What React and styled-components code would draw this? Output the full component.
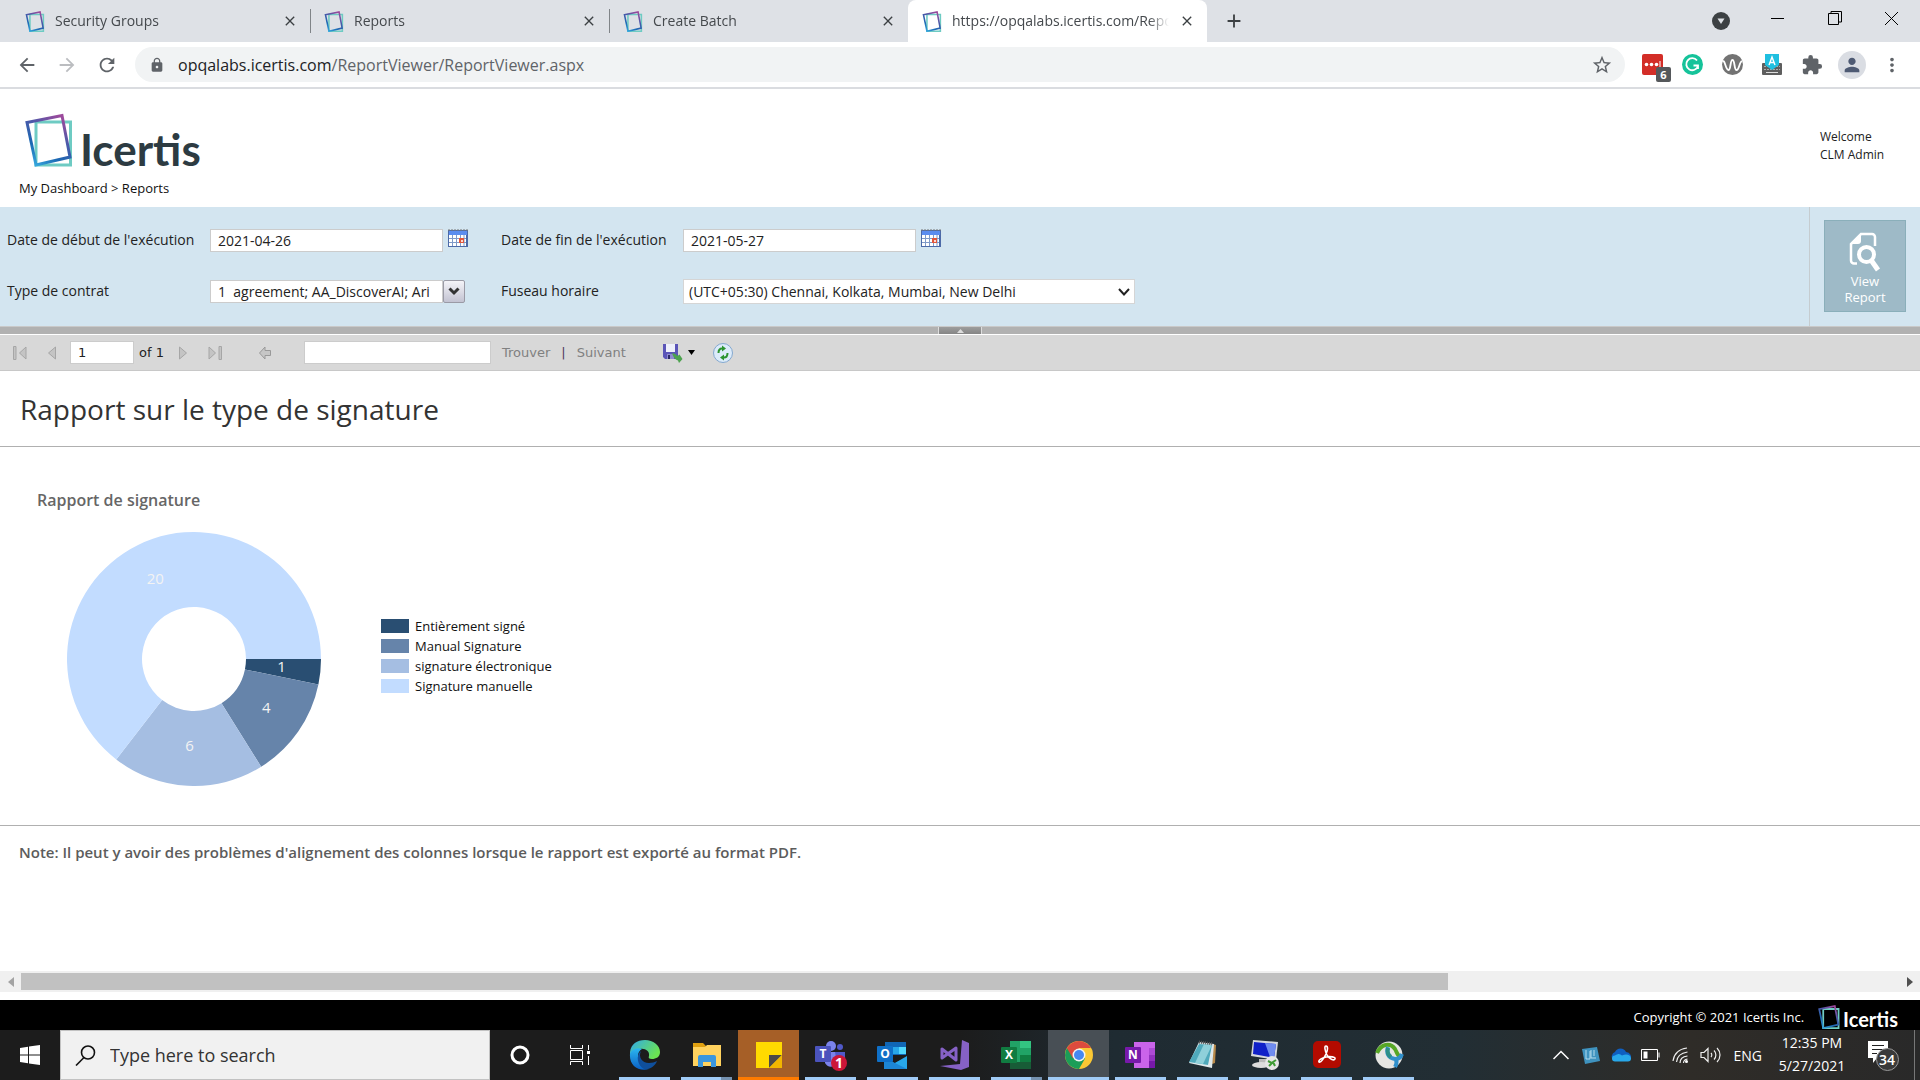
import React, { useState } from 'react';
import styled, { createGlobalStyle, css } from 'styled-components';
import {
  MdAdd,
  MdArrowBack,
  MdArrowForward,
  MdClose,
  MdExtension,
  MdLock,
  MdMoreVert,
  MdPerson,
  MdRefresh,
  MdStarBorder
} from 'react-icons/md';

const GlobalStyle = createGlobalStyle`
  *, *::before, *::after {
    box-sizing: border-box;
  }
  body {
    margin: 0;
    background-color: #fff;
    color: #222;
    font-family: 'Segoe UI', 'Open Sans', sans-serif;
    font-size: 14px;
  }
  button, input, select {
    font-family: inherit;
    font-size: inherit;
    color: inherit;
  }
  button {
    border: none;
    background: none;
    padding: 0;
  }
  svg {
    display: block;
    flex: none;
  }
`;

const Page = styled.div`
  display: flex;
  flex-direction: column;
  min-height: 100vh;
`;

/* browser window */

const TabStrip = styled.div`
  display: flex;
  height: 42px;
  padding-left: 11px;
  background-color: #dee1e6;
`;

const Tab = styled.div`
  display: flex;
  align-items: center;
  gap: 10px;
  width: 299px;
  padding: 0 12px 0 14px;
  color: #45494d;
  background-image: ${props =>
    props.$divided ? 'linear-gradient(#808488, #808488)' : 'none'};
  background-size: 1px 24px;
  background-position: left center;
  background-repeat: no-repeat;
  ${props =>
    props.$active &&
    css`
      background-color: #fff;
      border-radius: 8px 8px 0 0;
    `}
`;

const TabTitle = styled.span`
  flex: 1;
  min-width: 0;
  margin-right: -8px;
  overflow: hidden;
  white-space: nowrap;
  line-height: 20px;
  mask-image: linear-gradient(to left, transparent 8px, #000 28px);
`;

const CloseTab = styled.button`
  font-size: 16px;
  color: #3c4043;
`;

const NewTab = styled.button`
  width: 54px;
  display: grid;
  place-items: center;
  font-size: 22px;
  color: #3c4043;
`;

const WindowButtons = styled.div`
  display: flex;
  margin-left: auto;
  height: 36px;
`;

const WindowButton = styled.button`
  display: grid;
  place-items: center;
  width: 57px;
`;

const AddressBar = styled.div`
  display: flex;
  align-items: center;
  height: 47px;
  padding: 0 8px 0 7px;
  border-bottom: 2px solid #dadce0;
`;

const NavButton = styled.button`
  display: grid;
  place-items: center;
  width: 40px;
  height: 36px;
  font-size: 22px;
  color: ${props => (props.disabled ? '#bbbdc0' : '#5f6368')};
`;

const Omnibox = styled.div`
  display: flex;
  align-items: center;
  flex: 1;
  height: 35px;
  margin: 0 7px 0 8px;
  padding: 0 12px 0 14px;
  border-radius: 18px;
  background-color: #f1f3f4;
  font-size: 16px;
  color: #5f6368;
  p {
    flex: 1;
    margin: 0 0 0 13px;
    line-height: 24px;
  }
  b {
    font-weight: normal;
    color: #202124;
  }
  button {
    font-size: 22px;
  }
`;

const Avatar = styled.span`
  display: grid;
  place-items: center;
  width: 28px;
  height: 28px;
  border-radius: 50%;
  background-color: #dadde3;
  color: #4e5a73;
`;

const ExtensionBadge = styled.span`
  position: absolute;
  left: 24px;
  top: 20px;
  width: 15px;
  height: 15px;
  border-radius: 2px;
  background-color: #55585b;
  color: #fff;
  font-size: 11px;
  font-weight: bold;
  line-height: 15px;
  text-align: center;
`;

const ExtensionButton = styled(NavButton)`
  position: relative;
`;

/* page header */

const Header = styled.header`
  display: flex;
  justify-content: space-between;
  height: 118px;
  padding: 24px 31px 0 19px;
`;

const Brand = styled.div`
  display: flex;
  align-items: flex-end;
  gap: ${props => (props.$small ? 3 : 6)}px;
  padding-left: ${props => (props.$small ? 0 : 5)}px;
  color: ${props => (props.$small ? '#fff' : '#2d3b42')};
  font-family: Lato, sans-serif;
  font-weight: bold;
  font-size: ${props => (props.$small ? 20 : 44)}px;
  line-height: ${props => (props.$small ? 20 : 36)}px;
`;

const Breadcrumb = styled.nav`
  margin-top: 11px;
  font-size: 13px;
  line-height: 20px;
  a {
    color: #111;
    text-decoration: none;
  }
`;

const Welcome = styled.div`
  width: 69px;
  padding-top: 15px;
  font-size: 12px;
  line-height: 18px;
  white-space: nowrap;
`;

/* report parameters */

const Parameters = styled.form`
  display: flex;
  background-color: #d3e5f0;
  border-bottom: 1px solid #c9c9c9;
`;

const Fields = styled.div`
  flex: 1;
  display: grid;
  grid-template-columns: 203px 291px 182px 1fr;
  grid-auto-rows: 51px;
  align-items: center;
  padding: 8px 0 9px 7px;
`;

const Label = styled.label`
  line-height: 20px;
  padding-bottom: 2px;
`;

const Field = styled.div`
  display: flex;
  align-items: flex-start;
  gap: ${props => (props.$attached ? 0 : 5)}px;
`;

const TextInput = styled.input`
  width: ${props => props.$width || 233}px;
  height: 23px;
  border: 1px solid #ccc;
  border-radius: 0;
  padding: 0 7px;
  background-color: #fff;
  line-height: 20px;
  outline: none;
`;

const DropButton = styled.button`
  display: grid;
  place-items: center;
  width: 22px;
  height: 23px;
  border: 1px solid #9a9aa5;
  border-radius: 2px;
  background: linear-gradient(#f4f4f8, #c3c3d2);
`;

const SelectBox = styled.div`
  display: grid;
  width: 452px;
  align-items: center;
  & > * {
    grid-area: 1 / 1;
  }
  select {
    appearance: none;
    height: 25px;
    padding: 0 24px 0 5px;
    border: 1px solid #d5d5d5;
    border-radius: 0;
    background-color: #fff;
  }
  svg {
    justify-self: end;
    margin-right: 5px;
    pointer-events: none;
  }
`;

const ViewCell = styled.div`
  width: 111px;
  padding: 13px 14px;
  border-left: 1px solid #c5ccd0;
`;

const ViewButton = styled.button`
  display: flex;
  flex-direction: column;
  align-items: center;
  width: 82px;
  height: 92px;
  padding-top: 11px;
  border: 1px solid #8aafba;
  background-color: #9ebac7;
  color: #fff;
  font-size: 13px;
  line-height: 16px;
  svg {
    margin-bottom: 1px;
  }
`;

const Splitter = styled.div`
  display: flex;
  justify-content: center;
  height: 8px;
  background-color: #b1b1b1;
  border-bottom: 1px solid #fff;
`;

const SplitterHandle = styled.button`
  display: grid;
  place-items: center;
  width: 44px;
  border: solid #ddd;
  border-width: 0 1px;
  background: linear-gradient(#9d9d9d, #858585);
`;

/* viewer toolbar */

const ViewerToolbar = styled.div`
  display: flex;
  align-items: center;
  height: 36px;
  padding-left: 4px;
  background-color: #d8d8d8;
  border-bottom: 1px solid #c8c8c8;
  font-family: Verdana, 'DejaVu Sans', sans-serif;
  font-size: 13px;
`;

const ToolButton = styled.button`
  display: grid;
  place-items: center;
  width: 32px;
  height: 28px;
`;

const Pager = styled.div`
  display: flex;
  align-items: center;
  margin-right: 18px;
`;

const PageNumber = styled.div`
  display: flex;
  align-items: center;
  gap: 5px;
  padding: 0 3px 0 2px;
`;

const Find = styled.div`
  display: flex;
  align-items: center;
  padding: 0 31px 0 23px;
  gap: 11px;
  button {
    color: #808080;
  }
`;

const Divider = styled.span`
  color: #523a5c;
`;

const ExportButton = styled.button`
  display: flex;
  align-items: center;
  gap: 5px;
  padding: 0 12px 0 6px;
`;

/* report */

const Report = styled.main`
  flex: 1;
`;

const ReportTitle = styled.h1`
  margin: 0;
  padding: 19px 20px 17px;
  border-bottom: 1px solid #b0b0b0;
  color: #333;
  font-size: 28px;
  font-weight: normal;
  line-height: 39px;
`;

const ChartSection = styled.section`
  padding: 43px 37px 39px;
  border-bottom: 1px solid #b0b0b0;
`;

const ChartTitle = styled.h2`
  margin: 0 0 22px;
  color: #666;
  font-size: 16px;
  font-weight: 600;
  line-height: 20px;
`;

const Chart = styled.div`
  display: flex;
  align-items: center;
  gap: 60px;
  padding-left: 30px;
`;

const Legend = styled.ul`
  margin: 0;
  padding: 0 0 6px;
  list-style: none;
  font-size: 13px;
`;

const LegendItem = styled.li`
  display: flex;
  align-items: center;
  gap: 6px;
  height: 20px;
  color: #111;
  &::before {
    content: '';
    width: 28px;
    height: 14px;
    background-color: ${props => props.$color};
  }
`;

const Note = styled.p`
  margin: 0;
  padding: 16px 19px;
  color: #5c5c5c;
  font-size: 15px;
  font-weight: 600;
  line-height: 20px;
`;

const ScrollBar = styled.div`
  display: flex;
  align-items: center;
  height: 21px;
  margin-bottom: 8px;
  background-color: #f0f0f0;
`;

const ScrollArrow = styled.button`
  display: grid;
  place-items: center;
  width: 21px;
  height: 21px;
`;

const ScrollTrack = styled.div`
  flex: 1;
`;

const ScrollThumb = styled.div`
  width: 76%;
  height: 17px;
  background-color: #c1c1c1;
`;

const Footer = styled.footer`
  display: flex;
  align-items: center;
  justify-content: flex-end;
  gap: 14px;
  height: 30px;
  padding: 3px 22px 0 0;
  background-color: #000;
  color: #fff;
  font-size: 13px;
  line-height: 20px;
`;

/* desktop taskbar */

const TaskBar = styled.div`
  display: flex;
  height: 50px;
  background: linear-gradient(
    to right,
    #1c1c1c 50%,
    #1f2b32 58%,
    #222e34 76%,
    #2f2c28 88%,
    #292929
  );
  color: #fff;
`;

const TaskButton = styled.button`
  display: grid;
  place-items: center;
  width: 60px;
`;

const SearchBox = styled.label`
  display: flex;
  align-items: center;
  gap: 14px;
  width: 430px;
  padding-left: 14px;
  border: 1px solid #c2c2c2;
  background-color: #f1f1f1;
  color: #222;
  font-size: 18px;
  input {
    flex: 1;
    border: none;
    background: none;
    outline: none;
    padding: 0;
    &::placeholder {
      color: #333;
      opacity: 1;
    }
  }
`;

const Apps = styled.div`
  display: flex;
  padding-left: 4px;
`;

const appTones = {
  active: '#484f55',
  alert: '#a65f27'
};

const AppButton = styled.button`
  display: grid;
  grid-template-rows: 1fr 3px;
  place-items: center;
  width: 62px;
  padding: 3px 1px 0 0;
  background: ${props =>
    props.$tone
      ? `linear-gradient(${appTones[props.$tone]}, ${appTones[props.$tone]}) left / 61px 100% no-repeat`
      : 'none'};
  &::after {
    content: '';
    width: ${props => (props.$tone ? 61 : 51)}px;
    height: 3px;
    background: ${props => (props.$tone === 'alert' ? '#ff7b00' : '#a0cbf6')};
    border-right: ${props => (props.$stacked ? '11px solid #7592b0' : 'none')};
  }
`;

const Tray = styled.div`
  display: flex;
  align-items: center;
  margin-left: auto;
  line-height: 23px;
`;

const TrayButton = styled.button`
  display: grid;
  place-items: center;
  width: 30px;
  height: 50px;
`;

const Language = styled.button`
  padding-left: 8px;
`;

const Clock = styled.div`
  width: 82px;
  margin-left: 9px;
  padding-bottom: 2px;
  text-align: center;
`;

const Notifications = styled.button`
  width: 62px;
  height: 50px;
  display: grid;
  place-items: center;
  border-right: 1px solid #777;
  margin-right: 5px;
`;

const Mark = ({ width, height, id, stroke = 2 }) => (
  <svg width={width} height={height} viewBox="0 0 48 54" fill="none">
    <defs>
      <linearGradient id={id} x1="0.75" y1="0" x2="0.2" y2="1">
        <stop offset="0" stopColor="#9c4a9c" />
        <stop offset="0.35" stopColor="#4d58a8" />
        <stop offset="0.7" stopColor="#1b68b3" />
        <stop offset="1" stopColor="#36a6dc" />
      </linearGradient>
    </defs>
    <path d="M11 9H45.500V52H11Z" stroke="#6ecbc3" strokeWidth={stroke} />
    <path d="M2 9.500L37 2.500L45 44L11 52Z" stroke={`url(#${id})`} strokeWidth={stroke} />
  </svg>
);

const CalendarIcon = () => (
  <svg width="20" height="20" viewBox="0 0 20 20">
    <path d="M0 1h20v17H0z" fill="#4c6aa8" />
    <path d="M1 0v2M4 0v2M7 0v2M10 0v2M13 0v2M16 0v2M19 0v2" stroke="#777" />
    <path d="M1 2h18v4H1z" fill="#5b8def" />
    <path d="M1 6h17v11H1z" fill="#fff" />
    <path d="M1 9.500h17M1 13.500h17M4.500 6v11M8.500 6v11M12.500 6v11M16 6v11" stroke="#7f9ac8" />
    <path d="M11 9h5v5h-5z" fill="#e2563a" />
    <path d="M13 11h2v2h-2z" fill="#fbd9cf" />
  </svg>
);

const slices = [
  { name: 'Entièrement signé', value: 1, color: '#294e72' },
  { name: 'Manual Signature', value: 4, color: '#6684aa' },
  { name: 'signature électronique', value: 6, color: '#a5bee2' },
  { name: 'Signature manuelle', value: 20, color: '#c2dcff' }
];

const Donut = ({ data }) => {
  const outer = 127;
  const inner = 52;
  const total = data.reduce((sum, item) => sum + item.value, 0);
  const point = (radius, share) => {
    const angle = share * Math.PI * 2;
    return [outer + radius * Math.cos(angle), outer + radius * Math.sin(angle)];
  };
  let used = 0;
  return (
    <svg width="254" height="254" viewBox="0 0 254 254">
      {data.map(item => {
        const from = used / total;
        used += item.value;
        const to = used / total;
        const large = to - from > 0.5 ? 1 : 0;
        const [x, y] = point(88, (from + to) / 2);
        return (
          <g key={item.name}>
            <path
              fill={item.color}
              d={`M${point(outer, from)}A${outer} ${outer} 0 ${large} 1 ${point(outer, to)}L${point(inner, to)}A${inner} ${inner} 0 ${large} 0 ${point(inner, from)}Z`}
            />
            <text x={x} y={y + 4} fill="#f3f3f3" fontSize="15" textAnchor="middle">
              {item.value}
            </text>
          </g>
        );
      })}
    </svg>
  );
};

const tabs = ['Security Groups', 'Reports', 'Create Batch', 'https://opqalabs.icertis.com/Repo'];

const Browser = () => (
  <>
    <TabStrip>
      {tabs.map((title, index) => (
        <Tab key={title} $divided={index === 1 || index === 2} $active={index === 3}>
          <Mark id={`tab${index}`} width={20} height={21} stroke={4} />
          <TabTitle>{title}</TabTitle>
          <CloseTab aria-label="Close tab">
            <MdClose />
          </CloseTab>
        </Tab>
      ))}
      <NewTab aria-label="New tab">
        <MdAdd />
      </NewTab>
      <WindowButtons>
        <WindowButton aria-label="Search tabs">
          <svg width="18" height="30" viewBox="0 0 18 30">
            <circle cx="9" cy="18" r="9" fill="#3c4043" />
            <path d="M5.500 15.500h7L9 21z" fill="#dee1e6" />
          </svg>
        </WindowButton>
        <WindowButton aria-label="Minimize">
          <svg width="13" height="13" viewBox="0 0 13 13">
            <path d="M0 6.500h13" stroke="#000" />
          </svg>
        </WindowButton>
        <WindowButton aria-label="Restore">
          <svg width="14" height="14" viewBox="0 0 14 14" fill="none" stroke="#000">
            <path d="M0.500 2.500h10v11h-10zM3 2.500v-2h10.500v10.500h-3" />
          </svg>
        </WindowButton>
        <WindowButton aria-label="Close">
          <svg width="13" height="13" viewBox="0 0 13 13">
            <path d="M0 0L13 13M13 0L0 13" stroke="#000" />
          </svg>
        </WindowButton>
      </WindowButtons>
    </TabStrip>
    <AddressBar>
      <NavButton aria-label="Back">
        <MdArrowBack />
      </NavButton>
      <NavButton aria-label="Forward" disabled>
        <MdArrowForward />
      </NavButton>
      <NavButton aria-label="Reload">
        <MdRefresh />
      </NavButton>
      <Omnibox>
        <MdLock />
        <p>
          <b>opqalabs.icertis.com</b>/ReportViewer/ReportViewer.aspx
        </p>
        <button aria-label="Bookmark this page">
          <MdStarBorder />
        </button>
      </Omnibox>
      <ExtensionButton aria-label="LastPass">
        <svg width="21" height="21" viewBox="0 0 21 21">
          <rect width="21" height="21" rx="2" fill="#d32d27" />
          <circle cx="4.500" cy="10.500" r="1.800" fill="#fff" />
          <circle cx="9.500" cy="10.500" r="1.800" fill="#fff" />
          <circle cx="14.500" cy="10.500" r="1.800" fill="#fff" />
          <path d="M18 7v7" stroke="#fff" />
        </svg>
        <ExtensionBadge>6</ExtensionBadge>
      </ExtensionButton>
      <ExtensionButton aria-label="Grammarly">
        <svg width="21" height="21" viewBox="0 0 21 21" fill="none">
          <circle cx="10.500" cy="10.500" r="10.500" fill="#15c39a" />
          <path d="M15 6.500A6 6 0 1 0 16 12M11.500 11.500H16V15" stroke="#fff" strokeWidth="1.800" />
        </svg>
      </ExtensionButton>
      <ExtensionButton aria-label="Wordtune">
        <svg width="21" height="21" viewBox="0 0 21 21" fill="none">
          <circle cx="10.500" cy="10.500" r="10.500" fill="#737373" />
          <path
            d="M0.500 7.500C3 5 3.500 16 6.500 16C9 16 8 6 10.500 6S12 16 14.500 16C17.500 16 17 8 20 7"
            stroke="#fff"
            strokeWidth="1.800"
          />
        </svg>
      </ExtensionButton>
      <ExtensionButton aria-label="Keyboard">
        <svg width="20" height="21" viewBox="0 0 20 21" fill="none">
          <rect y="9" width="20" height="12" rx="1" fill="#5e5e5e" />
          <path d="M2 12.500h16M2 15.500h16" stroke="#aaa" strokeDasharray="2 1" />
          <path d="M4 18.500h12" stroke="#ddd" />
          <path d="M3 0h14v11l-7 5l-7-5z" fill="#1fbfe0" />
          <path d="M7 11L10 3L13 11M8 8.500h4" stroke="#fff" strokeWidth="1.400" />
        </svg>
      </ExtensionButton>
      <ExtensionButton aria-label="Extensions">
        <MdExtension />
      </ExtensionButton>
      <ExtensionButton aria-label="Profile">
        <Avatar>
          <MdPerson />
        </Avatar>
      </ExtensionButton>
      <ExtensionButton aria-label="Menu">
        <MdMoreVert />
      </ExtensionButton>
    </AddressBar>
  </>
);

const ParameterPanel = () => {
  const [start, setStart] = useState('2021-04-26');
  const [end, setEnd] = useState('2021-05-27');
  return (
    <Parameters onSubmit={e => e.preventDefault()}>
      <Fields>
        <Label htmlFor="start">Date de début de l'exécution</Label>
        <Field>
          <TextInput id="start" value={start} onChange={e => setStart(e.target.value)} />
          <button type="button" aria-label="Calendar">
            <CalendarIcon />
          </button>
        </Field>
        <Label htmlFor="end">Date de fin de l'exécution</Label>
        <Field>
          <TextInput id="end" value={end} onChange={e => setEnd(e.target.value)} />
          <button type="button" aria-label="Calendar">
            <CalendarIcon />
          </button>
        </Field>
        <Label htmlFor="type">Type de contrat</Label>
        <Field $attached>
          <TextInput id="type" readOnly value={'1\u00a0\u00a0agreement; AA_DiscoverAI; Ari'} />
          <DropButton type="button" aria-label="Choose">
            <svg width="12" height="9" viewBox="0 0 12 9" fill="none">
              <path d="M1.500 1.500L6 6L10.500 1.500" stroke="#333" strokeWidth="3" />
            </svg>
          </DropButton>
        </Field>
        <Label htmlFor="zone">Fuseau horaire</Label>
        <SelectBox>
          <select id="zone">
            <option>(UTC+05:30) Chennai, Kolkata, Mumbai, New Delhi</option>
          </select>
          <svg width="12" height="8" viewBox="0 0 12 8" fill="none">
            <path d="M1 1L6 6.500L11 1" stroke="#222" strokeWidth="2" />
          </svg>
        </SelectBox>
      </Fields>
      <ViewCell>
        <ViewButton>
          <svg width="32" height="40" viewBox="0 0 32 40" fill="none">
            <path
              d="M8 31.500H5a3 3 0 0 1-3-3V12L12 2H23a3 3 0 0 1 3 3V14"
              stroke="#fff"
              strokeWidth="2.500"
            />
            <path d="M2 12L12 2V9a3 3 0 0 1-3 3z" fill="#fff" />
            <circle cx="17.500" cy="22.500" r="7.500" stroke="#fff" strokeWidth="4" />
            <path d="M22 28L29 38" stroke="#fff" strokeWidth="5" />
          </svg>
          View
          <br />
          Report
        </ViewButton>
      </ViewCell>
    </Parameters>
  );
};

const PagerIcon = ({ back, bar }) => (
  <svg width="16" height="16" viewBox="0 0 16 16" fill="#c4c4c4" stroke="#a6a6a6">
    <g transform={back ? undefined : 'rotate(180 8 8)'}>
      {bar && <path d="M1.500 1.500h2.500v13h-2.500z" />}
      <path d={bar ? 'M14 2v12L7.500 8z' : 'M11.500 2v12L4.500 8z'} />
    </g>
  </svg>
);

const Toolbar = () => {
  const [page, setPage] = useState('1');
  return (
    <ViewerToolbar>
      <Pager>
        <ToolButton aria-label="First page">
          <PagerIcon back bar />
        </ToolButton>
        <ToolButton aria-label="Previous page">
          <PagerIcon back />
        </ToolButton>
        <PageNumber>
          <TextInput
            $width={64}
            aria-label="Current page"
            value={page}
            onChange={e => setPage(e.target.value)}
          />
          of 1
        </PageNumber>
        <ToolButton aria-label="Next page">
          <PagerIcon />
        </ToolButton>
        <ToolButton aria-label="Last page">
          <PagerIcon bar />
        </ToolButton>
      </Pager>
      <ToolButton aria-label="Back to parent report">
        <svg width="12" height="14" viewBox="0 0 12 14" fill="#c6c6c6" stroke="#999">
          <path d="M0.500 7L6 1V4.500H11.500V9.500H6V13z" />
        </svg>
      </ToolButton>
      <Find>
        <TextInput $width={187} aria-label="Find text" />
        <button>Trouver</button>
        <Divider>|</Divider>
        <button>Suivant</button>
      </Find>
      <ExportButton aria-label="Export">
        <svg width="20" height="20" viewBox="0 0 20 20">
          <path d="M0 1h15v15H2l-2-2z" fill="#5b55b8" />
          <path d="M3 1h9v8H3z" fill="#eef0fb" />
          <path d="M4 11h7v5H4z" fill="#8f8bd0" />
          <path d="M5 12h2v4H5z" fill="#2c2a66" />
          <path d="M8 10c3 0 5 1 6.500 3l2-1.500l3 4.500l-3.500 4l-1-2.500c-3-1-5-4-6-7.500z" fill="#4da34f" />
        </svg>
        <svg width="7" height="8" viewBox="0 0 7 8">
          <path d="M0 1h7L3.500 6z" fill="#000" />
        </svg>
      </ExportButton>
      <ToolButton aria-label="Refresh">
        <svg width="20" height="20" viewBox="0 0 20 20" fill="none">
          <circle cx="10" cy="10" r="9.500" fill="#dcebfa" stroke="#84a8cf" />
          <path d="M5.500 10c0-3 1-4.500 3.500-4.500M14.500 10c0 3-1 4.500-3.500 4.500" stroke="#2c9430" strokeWidth="2" />
          <path d="M9 2.500l4 3L9 8.500zM11 11.500l-4 3l4 3z" fill="#2c9430" />
        </svg>
      </ToolButton>
    </ViewerToolbar>
  );
};

const Letter = ({ x = 0, y = 8, color, children }) => (
  <>
    <rect x={x} y={y} width="16" height="16" rx="1" fill={color} />
    <text
      x={x + 8}
      y={y + 12}
      fill="#fff"
      fontSize="12"
      fontWeight="bold"
      textAnchor="middle"
    >
      {children}
    </text>
  </>
);

const apps = [
  {
    name: 'Edge',
    icon: (
      <>
        <defs>
          <linearGradient id="edgeTop" x1="0" y1="0" x2="1" y2="0.500">
            <stop offset="0" stopColor="#2fa9ec" />
            <stop offset="1" stopColor="#6be352" />
          </linearGradient>
          <linearGradient id="edgeSide" x1="0" y1="0" x2="0" y2="1">
            <stop offset="0" stopColor="#2bb6f0" />
            <stop offset="1" stopColor="#0a5fc4" />
          </linearGradient>
        </defs>
        <path d="M1 13C2 5 8 1 16 1c8 0 15 5 15 12c0 5-4 7-8 7c-3 0-4-1-3-3c1-5-4-8-9-7C6 11 3 13 1 16z" fill="url(#edgeTop)" />
        <path d="M1 15c1-4 7-7 12-5c-4 2-5 7-3 12c2 4 6 7 10 8C9 33 0 26 1 15z" fill="url(#edgeSide)" />
        <path d="M12 12c-3 6 1 12 8 12c3 0 6-1 8-2c-2 5-7 9-13 8C9 27 6 17 12 12z" fill="#0f4f9c" />
      </>
    )
  },
  {
    name: 'File Explorer',
    stacked: true,
    icon: (
      <>
        <path d="M2 4h10l3 3h14v18H2z" fill="#e0a010" />
        <path d="M2 8h12l2-2h14v21H2z" fill="#ffd25e" />
        <path d="M7 28V18a2 2 0 0 1 2-2h14a2 2 0 0 1 2 2v10h-5v-5h-8v5z" fill="#3a96dd" />
      </>
    )
  },
  {
    name: 'Sticky Notes',
    tone: 'alert',
    icon: (
      <>
        <path d="M3 3h26v26H3z" fill="#ffda00" />
        <path d="M16 29V16H29z" fill="#4c4a48" />
        <path d="M16 29H29V16z" fill="#f2b600" />
      </>
    )
  },
  {
    name: 'Teams',
    icon: (
      <>
        <circle cx="16" cy="7" r="5" fill="#7b83eb" />
        <circle cx="25" cy="8" r="3" fill="#5059c9" />
        <path d="M10 13h13v9a7 7 0 0 1-13 2z" fill="#7b83eb" />
        <path d="M20 13h10v8a5 5 0 0 1-8 3z" fill="#5059c9" />
        <Letter y={7} color="#4b53bc">T</Letter>
        <circle cx="24" cy="24" r="8" fill="#cc1638" />
        <text x="24" y="29" fill="#fff" fontSize="14" fontWeight="bold" textAnchor="middle">
          1
        </text>
      </>
    )
  },
  {
    name: 'Outlook',
    icon: (
      <>
        <path d="M8 3h21v13H8z" fill="#1066b5" />
        <path d="M15 8h7v7h-7z" fill="#28a8ea" />
        <path d="M22 8h7v7h-7z" fill="#50d9ff" />
        <path d="M8 15h7v7H8z" fill="#0a4f96" />
        <path d="M7 30V18l11 6l12-6v12z" fill="#1c86d6" />
        <path d="M30 17v13L18 24z" fill="#28a8ea" />
        <Letter y={7} color="#0f70c8">O</Letter>
      </>
    )
  },
  {
    name: 'Visual Studio',
    icon: (
      <>
        <path d="M23 1l7 3v24l-8 3L1 27l20-2z" fill="#8661c5" />
        <path
          d="M3 10v9l14-10v12L3 10z"
          fill="none"
          stroke="#8661c5"
          strokeWidth="3"
          strokeLinejoin="round"
        />
      </>
    )
  },
  {
    name: 'Excel',
    stacked: true,
    icon: (
      <>
        <path d="M9 2h21v28H9z" fill="#21a366" />
        <path d="M19 2h11v7H19z" fill="#33c481" />
        <path d="M19 16h11v7H19z" fill="#107c41" />
        <path d="M9 23h21v7H9z" fill="#185c37" />
        <Letter color="#107c41">X</Letter>
      </>
    )
  },
  {
    name: 'Chrome',
    tone: 'active',
    icon: (
      <>
        <circle cx="16" cy="16" r="14" fill="#fbc834" />
        <path d="M16 16L3.900 9A14 14 0 0 0 16 30L22 19.500z" fill="#1c9d58" />
        <path d="M16 9h12.100A14 14 0 0 0 3.900 9L10 19.500z" fill="#dd4b3e" />
        <circle cx="16" cy="16" r="6.500" fill="#f3f3f3" />
        <circle cx="16" cy="16" r="5" fill="#4688f1" />
      </>
    )
  },
  {
    name: 'OneNote',
    icon: (
      <>
        <path d="M9 3h21v26H9z" fill="#ca64ea" />
        <path d="M24 9h6v7h-6z" fill="#ae4bd5" />
        <path d="M24 16h6v6h-6z" fill="#9332bf" />
        <path d="M24 22h6v7h-6z" fill="#7719aa" />
        <Letter color="#7719aa">N</Letter>
      </>
    )
  },
  {
    name: 'Notepad',
    icon: (
      <>
        <path d="M26 5l3 1l-1 18l-3 1z" fill="#b98a4a" />
        <path d="M12 3l15 2l-2 24L2 24z" fill="#dfe9ec" />
        <path d="M12 5l13 1l-4 20L2 23z" fill="#4fa9bb" />
        <path d="M17 5l8 1l-9 19l-8-1z" fill="#8fd0da" />
        <path d="M12 3l14 2" stroke="#555" strokeWidth="3" strokeDasharray="1 1" />
      </>
    )
  },
  {
    name: 'Remote Desktop',
    icon: (
      <>
        <path d="M4 1l25 2l-2 18L2 17z" fill="#d5d8dc" />
        <path d="M5 3l22 2l-2 14L4 15z" fill="#1020c8" />
        <path d="M16 4l11 1l-2 14l-4-1z" fill="#6f8cf0" />
        <path d="M10 20h9v5h-9z" fill="#bbb" />
        <ellipse cx="12" cy="26" rx="9" ry="3" fill="#ddd" />
        <circle cx="23" cy="24" r="7" fill="#e6e6e6" />
        <path d="M19 22l4 2l-3 3M27 21l-3 2l2 4" fill="none" stroke="#3f9c35" strokeWidth="2" />
      </>
    )
  },
  {
    name: 'Acrobat',
    icon: (
      <>
        <rect x="2" y="2" width="28" height="27" rx="5" fill="#b30b00" />
        <path
          d="M15 7c-2 0-1 5 1 9c2 4 7 6 8 4c1-2-5-3-9-2c-4 1-8 3-7 5c2 1 5-4 7-8c2-4 2-8 0-8z"
          fill="none"
          stroke="#fff"
          strokeWidth="1.600"
        />
      </>
    )
  },
  {
    name: 'AnyConnect',
    icon: (
      <>
        <circle cx="16" cy="16" r="13.500" fill="#e6e6e3" />
        <path d="M4 14C8 5 17 3 22 10c2 3 2 7 6 8" fill="none" stroke="#57a626" strokeWidth="4" />
        <path d="M15 8c-2 6 0 11 7 12c4 0 6-2 7-5M23 20c1 3 1 5-1 8" fill="none" stroke="#3090cc" strokeWidth="4" />
        <path d="M15 9c-1 4 0 7 3 9" fill="none" stroke="#2c8f87" strokeWidth="4" />
      </>
    )
  }
];

const Desktop = () => (
  <TaskBar>
    <TaskButton aria-label="Start">
      <svg width="20" height="20" viewBox="0 0 20 20" fill="#fff">
        <path d="M0 3l8-1.200V9.500H0zM9 1.600L20 0V9.500H9zM0 10.500h8v7.700L0 17zM9 10.500H20V20L9 18.400z" />
      </svg>
    </TaskButton>
    <SearchBox>
      <svg width="21" height="21" viewBox="0 0 21 21" fill="none" stroke="#111" strokeWidth="1.600">
        <circle cx="13" cy="7.500" r="6.500" />
        <path d="M9 12.500L1 20.500" />
      </svg>
      <input type="text" placeholder="Type here to search" aria-label="Search" />
    </SearchBox>
    <TaskButton aria-label="Cortana">
      <svg width="20" height="20" viewBox="0 0 20 20" fill="none">
        <circle cx="10" cy="10" r="8" stroke="#fff" strokeWidth="3" />
      </svg>
    </TaskButton>
    <TaskButton aria-label="Task view">
      <svg width="20" height="20" viewBox="0 0 20 20" fill="none" stroke="#fff">
        <path d="M0.500 0v3.500h12V0M0.500 5.500h12v9h-12zM0.500 20v-3.500h12V20M18.500 0v5M18.500 11v9" />
        <path d="M17 6h3v3h-3z" fill="#fff" stroke="none" />
      </svg>
    </TaskButton>
    <Apps>
      {apps.map(app => (
        <AppButton key={app.name} aria-label={app.name} $tone={app.tone} $stacked={app.stacked}>
          <svg width="32" height="32" viewBox="0 0 32 32">
            {app.icon}
          </svg>
        </AppButton>
      ))}
    </Apps>
    <Tray>
      <TrayButton aria-label="Show hidden icons">
        <svg width="16" height="10" viewBox="0 0 16 10" fill="none">
          <path d="M0.500 9L8 1.500L15.500 9" stroke="#fff" strokeWidth="1.500" />
        </svg>
      </TrayButton>
      <TrayButton aria-label="Display">
        <svg width="18" height="17" viewBox="0 0 18 17">
          <path d="M0 2l15-2l3 14l-15 3z" fill="#3f93bf" />
          <path d="M4 3v9h4V4M9 3v8h5M12 3v6" fill="none" stroke="#b5dcee" />
        </svg>
      </TrayButton>
      <TrayButton aria-label="OneDrive">
        <svg width="20" height="14" viewBox="0 0 20 14">
          <path d="M2 12a5 5 0 0 1 2-8a6 6 0 0 1 11 0a5 5 0 0 1 4 8z" fill="#0f5fc0" />
          <path d="M4 13.500a3 3 0 0 1 0-6c3-2 5-2 7 0c4-2 9-1 9 3a3 3 0 0 1-3 3z" fill="#28a8ea" />
        </svg>
      </TrayButton>
      <TrayButton aria-label="Battery">
        <svg width="19" height="12" viewBox="0 0 19 12" fill="none" stroke="#fff">
          <path d="M0.500 0.500h16v11h-16zM18 3.500v5" />
          <path d="M2.500 2.500h4v7h-4z" fill="#fff" stroke="none" />
        </svg>
      </TrayButton>
      <TrayButton aria-label="Network">
        <svg width="17" height="17" viewBox="0 0 17 17" fill="none" stroke="#eee" strokeWidth="1.200">
          <path d="M1 14C2 7 7 2 15 1M4.500 15C5 9.500 9 6 15.500 5M8 16c0-4 3-6.500 7.500-7M11.500 16c0-2 1.500-3.500 4-4" />
          <circle cx="14.500" cy="14.500" r="1.500" fill="#fff" stroke="none" />
        </svg>
      </TrayButton>
      <TrayButton aria-label="Volume">
        <svg width="21" height="18" viewBox="0 0 21 18" fill="none" stroke="#eee" strokeWidth="1.200">
          <path d="M1 6.500h3L8 2.500v13L4 11.500H1zM11 7c1 1 1 3 0 4M14 4.500c2.500 2.500 2.500 6.500 0 9M17 2c4 4 4 10 0 14" />
        </svg>
      </TrayButton>
      <Language>ENG</Language>
      <Clock>
        12:35 PM
        <br />
        5/27/2021
      </Clock>
      <Notifications aria-label="34 notifications">
        <svg width="33" height="32" viewBox="0 0 33 32">
          <path d="M1 2h20v17H10l-4 5v-5H1z" fill="#fff" />
          <path d="M5 6.500h12M5 10.500h12M5 14.500h5" stroke="#222" />
          <circle cx="20.500" cy="20.500" r="11" fill="#3a3a3a" stroke="#999" />
          <text x="20" y="26" fill="#fff" fontSize="14" fontWeight="600" textAnchor="middle">
            34
          </text>
        </svg>
      </Notifications>
    </Tray>
  </TaskBar>
);

const App = () => (
  <Page>
    <GlobalStyle />
    <Browser />
    <Header>
      <div>
        <Brand>
          <Mark id="logo" width={50} height={54} stroke={3} />
          Icertis
        </Brand>
        <Breadcrumb>
          <a href="#dashboard">My Dashboard</a> &gt; <a href="#reports">Reports</a>
        </Breadcrumb>
      </div>
      <Welcome>
        Welcome
        <br />
        CLM Admin
      </Welcome>
    </Header>
    <ParameterPanel />
    <Splitter>
      <SplitterHandle aria-label="Hide parameters">
        <svg width="7" height="4" viewBox="0 0 7 4">
          <path d="M0 4h7L3.500 0z" fill="#ddd" />
        </svg>
      </SplitterHandle>
    </Splitter>
    <Toolbar />
    <Report>
      <ReportTitle>Rapport sur le type de signature</ReportTitle>
      <ChartSection>
        <ChartTitle>Rapport de signature</ChartTitle>
        <Chart>
          <Donut data={slices} />
          <Legend>
            {slices.map(item => (
              <LegendItem key={item.name} $color={item.color}>
                {item.name}
              </LegendItem>
            ))}
          </Legend>
        </Chart>
      </ChartSection>
      <Note>
        Note: Il peut y avoir des problèmes d'alignement des colonnes lorsque le rapport est
        exporté au format PDF.
      </Note>
    </Report>
    <ScrollBar>
      <ScrollArrow aria-label="Scroll left">
        <svg width="6" height="10" viewBox="0 0 6 10">
          <path d="M6 0v10L0 5z" fill="#a3a3a3" />
        </svg>
      </ScrollArrow>
      <ScrollTrack>
        <ScrollThumb />
      </ScrollTrack>
      <ScrollArrow aria-label="Scroll right">
        <svg width="6" height="10" viewBox="0 0 6 10">
          <path d="M0 0v10L6 5z" fill="#505050" />
        </svg>
      </ScrollArrow>
    </ScrollBar>
    <Footer>
      Copyright © 2021 Icertis Inc.
      <Brand $small>
        <Mark id="footerLogo" width={22} height={24} stroke={4} />
        Icertis
      </Brand>
    </Footer>
    <Desktop />
  </Page>
);

export default App;
